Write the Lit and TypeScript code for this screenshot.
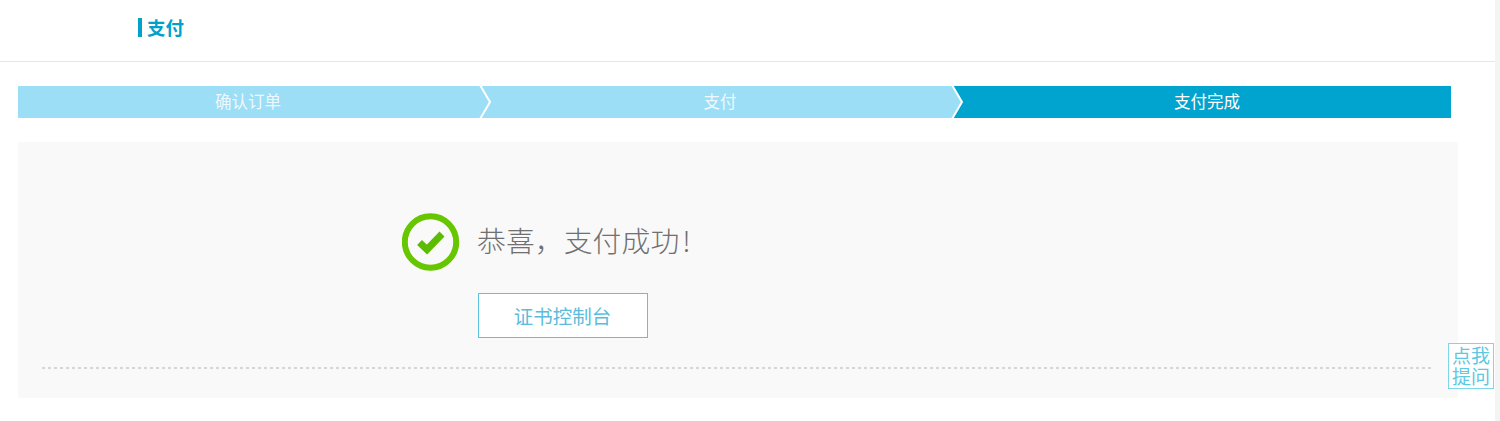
import { LitElement, html, css } from "lit";
import { customElement } from "lit/decorators.js";

const chevron = html`<svg class="chev" viewBox="0 0 14 32" width="14" height="32" aria-hidden="true">
  <path class="fillp" d="M0 0H2L12 16L2 32H0Z"></path>
  <path class="line" d="M2 -1L12 16L2 33" fill="none"></path>
</svg>`;

@customElement("app-root")
export class AppRoot extends LitElement {
  static styles = css`
    :host {
      display: block;
      position: relative;
      height: 421px;
      overflow: hidden;
      background: #fff;
      font-family: "Noto Sans CJK SC", "Noto Sans", sans-serif;
    }
    .header {
      box-sizing: border-box;
      height: 62px;
      border-bottom: 1px solid #e6e6e6;
      display: flex;
      align-items: flex-start;
      padding: 18px 0 0 138px;
      margin-right: 5px;
    }
    .title {
      border-left: 4px solid #00a2ca;
      padding-left: 5px;
      height: 19px;
      line-height: 19px;
      font-size: 18.500px;
      font-weight: 700;
      color: #00a2ca;
    }
    .steps {
      display: grid;
      grid-template-columns: 462px 472px 499px;
      width: 1433px;
      height: 32px;
      margin: 24px 0 24px 18px;
      color: rgba(255, 255, 255, 0.85);
      font-size: 16.500px;
      line-height: 30px;
      text-align: center;
    }
    .step {
      position: relative;
      background: #9cdef6;
    }
    .step.active {
      background: #00a4cf;
      padding-left: 11px;
      color: #fff;
    }
    .step.second {
      padding-left: 8px;
    }
    .step.first {
      padding-right: 2px;
    }
    .chev {
      position: absolute;
      top: 0;
      right: -12px;
      z-index: 1;
      display: block;
      overflow: visible;
    }
    .fillp {
      fill: #9cdef6;
    }
    .line {
      stroke: #fff;
      stroke-width: 2;
    }
    .panel {
      margin: 0 42px 0 18px;
      padding: 71px 24px 28px;
      background: #f9f9f9;
      border-radius: 2px;
    }
    .result {
      display: flex;
      align-items: center;
      gap: 18px;
      padding-left: 360px;
      height: 58px;
      font-size: 28.800px;
      font-weight: 300;
      color: #707070;
    }
    .result svg {
      display: block;
      flex: none;
    }
    .result .msg {
      padding-bottom: 5px;
      margin-left: -1px;
      letter-spacing: 0.1px;
    }
    .bang {
      margin-left: 3px;
    }
    .btn {
      display: flex;
      align-items: center;
      justify-content: center;
      box-sizing: border-box;
      width: 170px;
      height: 45px;
      margin: 22px 0 30px 436px;
      padding-right: 1px;
      background: #fff;
      border: 1.500px solid #5cc3de;
      color: #5bbcdc;
      font-size: 19.500px;
    }
    .dots {
      height: 2px;
      margin-top: -1px;
      margin-bottom: 1px;
      background: repeating-linear-gradient(90deg, #d6d6d6 0 3px, transparent 3px 6px);
    }
    .ask {
      position: absolute;
      left: 1448px;
      top: 343px;
      box-sizing: border-box;
      width: 46px;
      height: 46px;
      border: 1.500px solid #7dd6ea;
      background: #fff;
      color: #5cc8e2;
      font-size: 19px;
      line-height: 21px;
      text-align: center;
    }
    .scroll {
      position: absolute;
      top: 0;
      right: 0;
      bottom: 0;
      width: 5px;
      background: #f4f4f4;
    }
  `;

  render() {
    return html`
      <div class="header"><div class="title">支付</div></div>
      <div class="steps">
        <div class="step first">确认订单${chevron}</div>
        <div class="step second">支付${chevron}</div>
        <div class="step active">支付完成</div>
      </div>
      <div class="panel">
        <div class="result">
          <svg width="58" height="58" viewBox="0 0 58 58" aria-hidden="true">
            <circle cx="28.500" cy="29" r="25.700" fill="none" stroke="#66c600" stroke-width="6"></circle>
            <path d="M17.500 29.500L25 36.500L40 21" fill="none" stroke="#5cbc00" stroke-width="7"></path>
          </svg>
          <span class="msg">恭喜，支付成功<span class="bang">!</span></span>
        </div>
        <div class="btn">证书控制台</div>
        <div class="dots"></div>
      </div>
      <div class="ask">点我<br />提问</div>
      <div class="scroll"></div>
    `;
  }
}
